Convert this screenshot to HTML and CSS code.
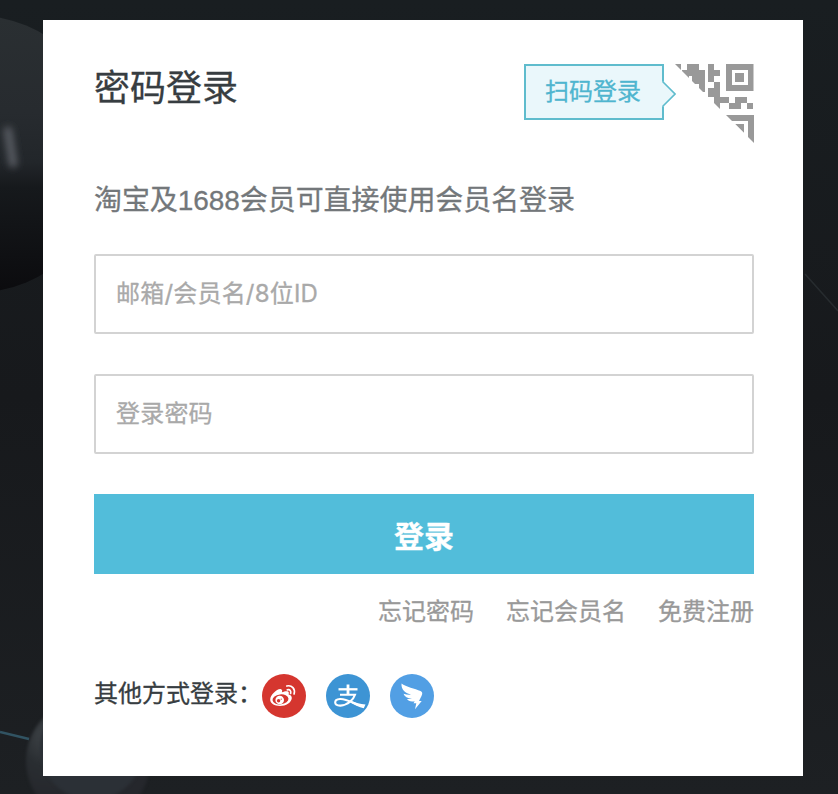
FILE: index.html
```html
<!DOCTYPE html>
<html lang="zh-CN">
<head>
<meta charset="utf-8">
<title>密码登录</title>
<link rel="stylesheet" href="styles.css">
</head>
<body>
<svg class="backdrop" viewBox="0 0 838 794" aria-hidden="true">
  <defs>
    <linearGradient id="bg" x1="0" y1="0" x2="0" y2="1">
      <stop offset="0" stop-color="#191e21"/><stop offset=".5" stop-color="#17191c"/><stop offset="1" stop-color="#1d2023"/>
    </linearGradient>
    <linearGradient id="sphere" x1="0" y1="0" x2="0" y2="1">
      <stop offset="0" stop-color="#2a2f32"/><stop offset=".35" stop-color="#272b2f"/><stop offset=".53" stop-color="#22262a"/><stop offset=".62" stop-color="#16191c"/><stop offset="1" stop-color="#0b0b0e"/>
    </linearGradient>
    <radialGradient id="orb" cx=".2" cy=".3" r=".5">
      <stop offset="0" stop-color="#42474b"/><stop offset=".5" stop-color="#292d31"/><stop offset="1" stop-color="#25272c"/>
    </radialGradient>
    <filter id="soft" x="-400%" y="-100%" width="900%" height="300%"><feGaussianBlur stdDeviation="3.5"/></filter>
    <filter id="edge" color-interpolation-filters="sRGB"><feGaussianBlur stdDeviation="1.5"/></filter>
  </defs>
  <rect width="838" height="794" fill="url(#bg)"/>
  <circle cx="-27" cy="154" r="139" fill="url(#sphere)"/>
  <path d="M8 131 L13 163" stroke="#55585e" stroke-width="9" stroke-linecap="round" filter="url(#soft)"/>
  <circle cx="88" cy="761" r="62" fill="url(#orb)" filter="url(#edge)"/>
  <circle cx="92" cy="748" r="52" fill="#2b3036" filter="url(#edge)"/>
  <path d="M0 732 L29 739" stroke="#315362" stroke-width="2.5"/>
  <path d="M805 274 L838 311" stroke="#272c2f" stroke-width="1.5"/>
</svg>
<main class="card">
  <header class="head">
    <h1 class="title">密码登录</h1>
    <div class="scan">
      <div class="scan-tip">扫码登录
        <svg class="scan-arrow" width="14" height="26" viewBox="0 0 14 26"><path d="M0 0 H2 L13 13 L2 26 H0Z" fill="#eaf7fb"/><path d="M1 0V1L13 13L1 25V26" fill="none" stroke="#5fbccd" stroke-width="1.6"/></svg>
      </div>
      <svg class="qr" width="79" height="79" viewBox="0 0 79 79" fill="#999">
        <clipPath id="half"><path d="M0 0H79V79Z"/></clipPath>
        <g clip-path="url(#half)">
          <path d="M0 0H6V6H0ZM12 0H24V6H30V28H24V18H18V12H12V6H12ZM7 6H14V18H7ZM17 12H25V20H17ZM33 0H39V6H45V12H39V18H33ZM39 18H45V33H54V39H45V45H39V33H33V24H39ZM60 33H72V39H66V45H54V39H60ZM72 39H78V45H72ZM50 51H79V79H73V57H50ZM60 60H69V69Z"/>
          <path fill-rule="evenodd" d="M51 0H78.500V27H51ZM57 6V21H73V6Z"/>
          <path d="M60 9H69V18H60Z"/>
        </g>
      </svg>
    </div>
  </header>
  <p class="hint">淘宝及1688会员可直接使用会员名登录</p>
  <form class="form">
    <input class="field" type="text" placeholder="邮箱/会员名/8位ID">
    <input class="field" type="password" placeholder="登录密码">
    <button class="submit" type="button">登录</button>
  </form>
  <nav class="links"><a>忘记密码</a><a>忘记会员名</a><a>免费注册</a></nav>
  <footer class="other">
    <span class="other-label">其他方式登录：</span>
    <div class="icons">
      <svg width="44" height="44" viewBox="0 0 44 44">
        <circle cx="22" cy="22" r="22" fill="#d5362f"/>
        <path fill="#fff" d="M19 15.200C20.500 15.600 20.300 17 19.900 18.300C23 17 26.500 16.600 26.800 18.500C27 19.400 26.500 20 26.700 20.500C28.600 21 30 22.200 29.800 24.300C29.300 28.800 24 32 18 32C12.500 32 8.200 29.500 8.200 25.600C8.200 21 15.500 14.200 19 15.200Z"/>
        <ellipse cx="18.500" cy="25.400" rx="8" ry="5" fill="#d5362f" transform="rotate(-6 18.500 25.400)"/>
        <circle cx="17.700" cy="26" r="4.300" fill="#fff"/>
        <circle cx="16.600" cy="26.800" r="1.700" fill="#d5362f"/><circle cx="19.200" cy="25.200" r=".6" fill="#d5362f"/>
        <path d="M25.300 15.800C28 15.200 29.300 17 28.600 19.400M24.800 12C30 10.800 33.500 15 32.100 19.900" fill="none" stroke="#fff" stroke-width="1.700" stroke-linecap="round"/>
      </svg>
      <svg width="44" height="44" viewBox="0 0 44 44">
        <circle cx="22" cy="22" r="22" fill="#3d94d4"/>
        <g fill="none" stroke="#fff">
          <path d="M12.500 15.300H31.500" stroke-width="2.300"/>
          <path d="M22 10.500V20.500" stroke-width="2.800"/>
          <path d="M14 20.800H29C27.500 25.500 22 31.200 14.500 31.600C7.500 31.800 7.500 25.400 14 25C20 24.600 26 28.500 32 30.800" stroke-width="2.100"/>
        </g>
        <path fill="#fff" d="M24 26.500C30 29 34 30 39.500 30.500L37.800 34.300C33 33.600 28 30.500 23 27.500Z"/>
      </svg>
      <svg width="44" height="44" viewBox="0 0 44 44">
        <circle cx="22" cy="22" r="22" fill="#529fe4"/>
        <path fill="#fff" d="M11.500 9.500C16 13 25 14.700 30.500 17C32.800 18 32.500 20 31.500 22L29 27H31.700L25 35.200L26.300 29.300H23.500L24.700 27.200C20.500 27.800 18.300 27 17 24.900C19.200 25.200 21 25 22 24.600C17.500 24.400 14.600 22.600 13.500 19.700C16 20.600 19 20.900 21.300 20.600C15.600 19.300 11 16 11.500 9.500Z"/>
      </svg>
    </div>
  </footer>
</main>
</body>
</html>
```

FILE: styles.css
```css
* { box-sizing: border-box; }
body {
  margin: 0;
  height: 794px;
  padding: 20px 35px 18px 43px;
  overflow: hidden;
  background: #191c1f;
  font-family: "Liberation Sans", "Noto Sans CJK SC", sans-serif;
  color: #373d41;
  -webkit-text-stroke: 0.3px currentColor;
}
.backdrop { position: absolute; left: 0; top: 0; width: 838px; height: 794px; }
.card {
  position: relative;
  width: 760px;
  height: 756px;
  padding: 44px 49px 0 51px;
  background: #fff;
}
.head { display: flex; justify-content: space-between; height: 116px; }
.title { margin: 0; font-size: 36px; line-height: 50px; font-weight: 400; }
.scan { display: flex; gap: 11px; align-items: flex-start; }
.scan-tip {
  position: relative;
  width: 140px;
  height: 56px;
  padding-right: 2px;
  border: 2px solid #5fbccd;
  background: #eaf7fb;
  color: #4fb5cf;
  font-size: 24px;
  line-height: 52px;
  text-align: center;
}
.scan-arrow { position: absolute; right: -14px; top: 15px; }
.qr { display: block; }
.hint { margin: 0; height: 74px; font-size: 28px; line-height: 42px; letter-spacing: -0.07px; color: #73777a; }
.form { display: flex; flex-direction: column; gap: 40px; }
.field {
  width: 100%;
  height: 80px;
  padding: 0 20px 2px;
  border: 2px solid #d3d3d3;
  border-radius: 2px;
  background: #fff;
  font-family: "Inter", "Noto Sans CJK SC", sans-serif;
  font-size: 24px;
  letter-spacing: 0.2px;
  outline: none;
  -webkit-text-stroke: 0.3px #a9a9a9;
}
.field::placeholder { color: #a9a9a9; opacity: 1; }
.submit {
  height: 80px;
  padding: 0;
  border: 0;
  background: #52bdda;
  color: #fff;
  font: 700 30px/80px "Noto Sans CJK SC", sans-serif;
}
.links {
  display: flex;
  justify-content: flex-end;
  gap: 32px;
  padding-top: 20px;
  font-size: 24px;
  line-height: 36px;
  color: #999;
}
.other { display: flex; align-items: flex-start; height: 44px; margin-top: 44px; }
.other-label { width: 168px; font-size: 24px; line-height: 40px; white-space: nowrap; }
.icons { display: flex; gap: 20px; }
.icons svg { display: block; }
```
